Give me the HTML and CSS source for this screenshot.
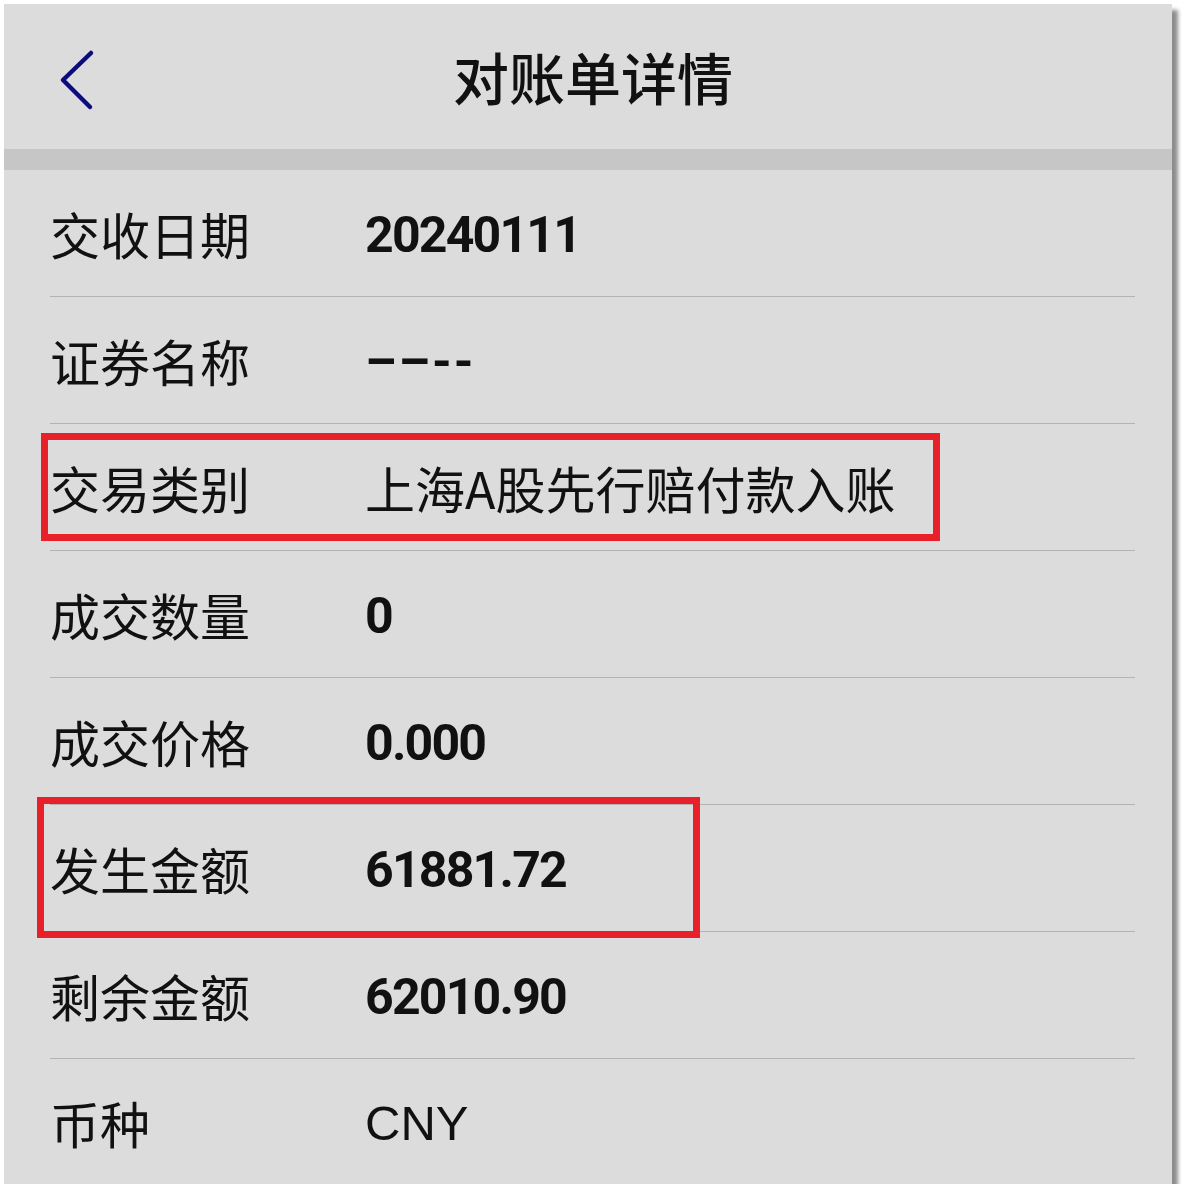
FILE: index.html
```html
<!DOCTYPE html>
<html lang="zh-CN">
<head>
<meta charset="utf-8">
<title>对账单详情</title>
<link rel="stylesheet" href="styles.css">
</head>
<body>
<div class="panel">
  <header class="topbar">
    <span class="back">
      <svg width="40" height="64" viewBox="0 0 40 64"><path d="M33 5 L5 32 L32 59" fill="none" stroke="#0c0c7c" stroke-width="4.5" stroke-linecap="round" stroke-linejoin="round"/></svg>
    </span>
    <h1 class="title">对账单详情</h1>
  </header>
  <div class="divider"></div>
  <div class="list">
    <div class="row"><span class="label">交收日期</span><span class="value num">20240111</span></div>
    <div class="row"><span class="label">证券名称</span><span class="value num dashes">––--</span></div>
    <div class="row"><span class="label">交易类别</span><span class="value">上海A股先行赔付款入账</span></div>
    <div class="row"><span class="label">成交数量</span><span class="value num">0</span></div>
    <div class="row"><span class="label">成交价格</span><span class="value num">0.000</span></div>
    <div class="row"><span class="label">发生金额</span><span class="value num">61881.72</span></div>
    <div class="row"><span class="label">剩余金额</span><span class="value num">62010.90</span></div>
    <div class="row last"><span class="label">币种</span><span class="value latin">CNY</span></div>
  </div>
  <div class="mark mark-type"></div>
  <div class="mark mark-amount"></div>
</div>
</body>
</html>
```

FILE: styles.css
```css
html, body {
  margin: 0;
  padding: 0;
  background: #ffffff;
}
body {
  font-family: "Noto Sans CJK SC", "Noto Sans", sans-serif;
  color: #111111;
}
.panel {
  position: relative;
  margin: 4px 0 0 4px;
  width: 1168px;
  height: 1180px;
  background: #dcdcdc;
  box-shadow: 6px 6px 4px rgba(0, 0, 0, 0.45);
}
.topbar {
  position: relative;
  height: 145px;
  display: flex;
  align-items: center;
  justify-content: center;
}
.back {
  position: absolute;
  left: 54px;
  top: 44px;
  width: 40px;
  height: 64px;
  display: block;
}
.back svg { display: block; }
.title {
  margin: 0;
  font-size: 56px;
  font-weight: 500;
  line-height: 1;
  color: #111111;
  padding-left: 10px;
  padding-bottom: 2px;
}
.divider {
  height: 21px;
  background: #c6c6c6;
}
.list {
  padding: 0 37px 0 46px;
}
.row {
  height: 126px;
  display: flex;
  align-items: center;
  border-bottom: 1px solid #b3b3b3;
}
.row.last {
  border-bottom: none;
}
.label {
  width: 315px;
  flex: none;
  font-size: 50px;
  line-height: 1;
}
.value {
  font-size: 50px;
  line-height: 1;
}
.num {
  font-family: Roboto, "Liberation Sans", sans-serif;
  font-weight: 700;
  letter-spacing: -1.8px;
  padding-top: 4px;
}
.dashes {
  letter-spacing: 2px;
}
.latin {
  font-family: "Liberation Sans", Arial, sans-serif;
  font-size: 49px;
  padding-top: 2px;
}
.mark {
  position: absolute;
  border: 7px solid #e8202a;
  box-sizing: border-box;
}
.mark-type {
  left: 37px;
  top: 429px;
  width: 899px;
  height: 108px;
}
.mark-amount {
  left: 33px;
  top: 793px;
  width: 663px;
  height: 141px;
}
```
